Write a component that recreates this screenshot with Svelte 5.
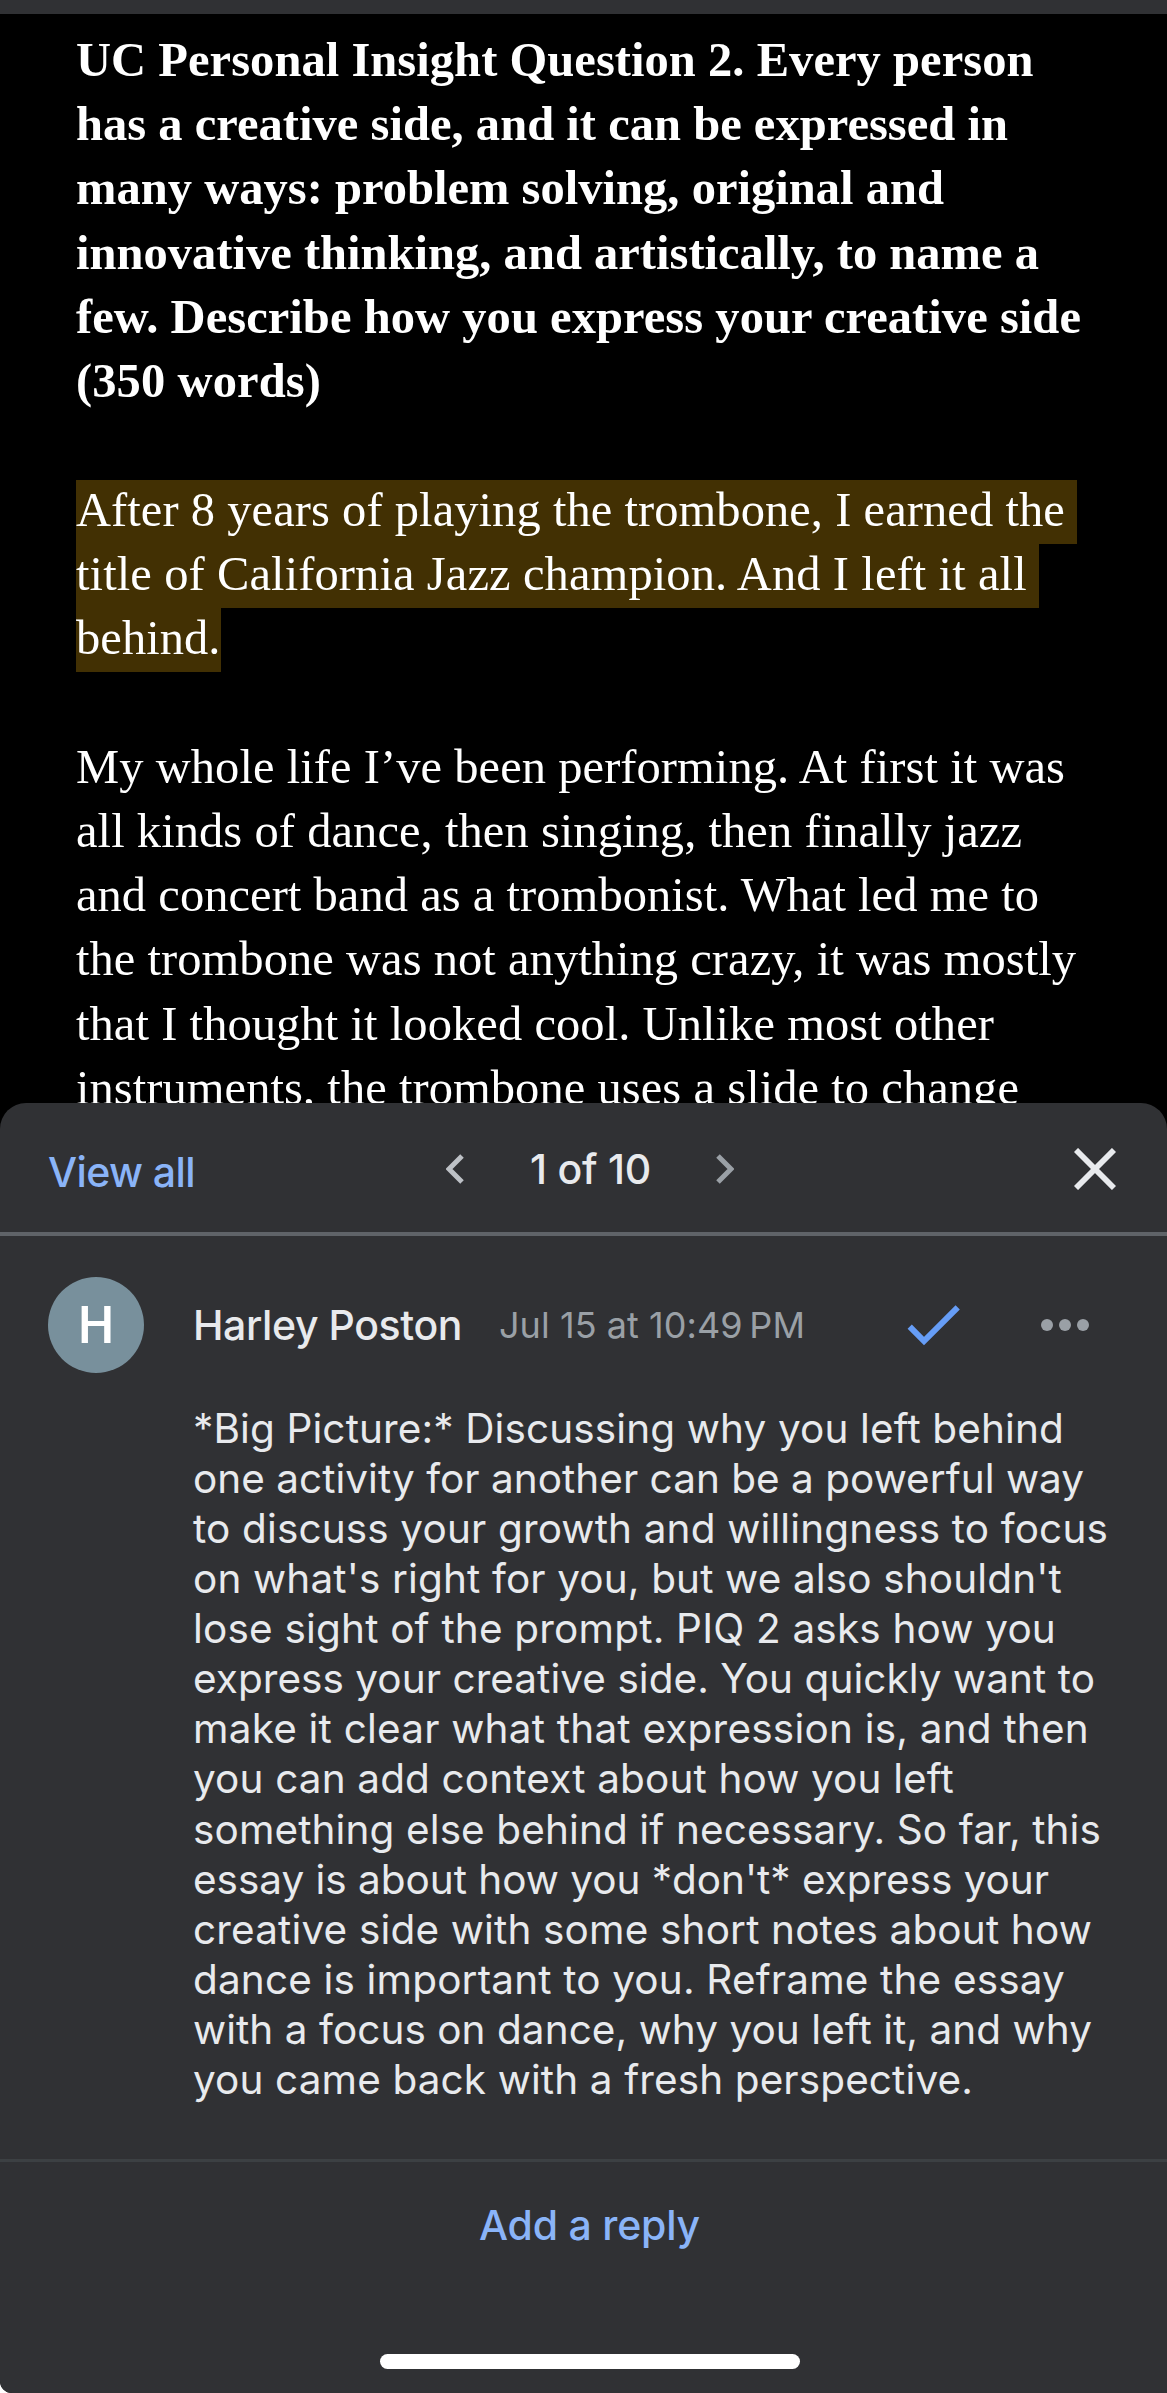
<script lang="ts">
  type Line = [text: string, width: number];

  const prompt: Line[] = [
    ["UC Personal Insight Question 2. Every person", 957.5],
    ["has a creative side, and it can be expressed in", 932],
    ["many ways: problem solving, original and", 868],
    ["innovative thinking, and artistically, to name a", 963],
    ["few. Describe how you express your creative side", 1005],
    ["(350 words)", 245],
  ];

  const highlighted: Line[] = [
    ["After 8 years of playing the trombone, I earned the ", 1001],
    ["title of California Jazz champion. And I left it all ", 963],
    ["behind.", 144.5],
  ];

  const essay: Line[] = [
    ["My whole life I’ve been performing. At first it was", 989],
    ["all kinds of dance, then singing, then finally jazz", 946],
    ["and concert band as a trombonist. What led me to", 963],
    ["the trombone was not anything crazy, it was mostly", 1000],
    ["that I thought it looked cool. Unlike most other", 918],
    ["instruments, the trombone uses a slide to change", 943],
  ];

  const comment: Line[] = [
    ["*Big Picture:* Discussing why you left behind", 871],
    ["one activity for another can be a powerful way", 891],
    ["to discuss your growth and willingness to focus", 915],
    ["on what's right for you, but we also shouldn't", 869],
    ["lose sight of the prompt. PIQ 2 asks how you", 863],
    ["express your creative side. You quickly want to", 902],
    ["make it clear what that expression is, and then", 896],
    ["you can add context about how you left", 761],
    ["something else behind if necessary. So far, this", 908],
    ["essay is about how you *don't* express your", 856],
    ["creative side with some short notes about how", 899],
    ["dance is important to you. Reframe the essay", 872],
    ["with a focus on dance, why you left it, and why", 899],
    ["you came back with a fresh perspective.", 780],
  ];

  // spread the letters so that a line is exactly `width` wide
  function fit(node: HTMLElement, width: number) {
    const natural = node.getBoundingClientRect().width;
    const count = node.textContent?.length ?? 1;
    node.style.letterSpacing = `${(width - natural) / count}px`;
  }
</script>

<div class="screen">
  <div class="toolbar"></div>

  <main class="doc">
    <h1>
      {#each prompt as [text, width]}
        <span class="line"><span class="text" use:fit={width}>{text}</span></span>
      {/each}
    </h1>
    <p>
      {#each highlighted as [text, width]}
        <span class="line"><span class="text mark" use:fit={width}>{text}</span></span>
      {/each}
    </p>
    <p>
      {#each essay as [text, width]}
        <span class="line"><span class="text" use:fit={width}>{text}</span></span>
      {/each}
    </p>
  </main>

  <section class="sheet">
    <header>
      <button class="link"><span class="text" use:fit={147}>View all</span></button>
      <nav>
        <svg width="18" height="30" viewBox="0 0 18 30">
          <path d="M16 2 3 15l13 13" stroke="#bdc1c6" stroke-width="5" fill="none" />
        </svg>
        <span class="count"><span class="text" use:fit={121}>1 of 10</span></span>
        <svg width="18" height="30" viewBox="0 0 18 30">
          <path d="M2 2l13 13L2 28" stroke="#9aa0a6" stroke-width="5" fill="none" />
        </svg>
      </nav>
      <svg class="close" width="42" height="42" viewBox="0 0 42 42">
        <path d="M2 2l38 38M40 2 2 40" stroke="#e8eaed" stroke-width="5.8" fill="none" />
      </svg>
    </header>

    <article>
      <div class="avatar">H</div>
      <div class="meta">
        <span class="name"><span class="text" use:fit={269}>Harley Poston</span></span>
        <span class="date"><span class="text" use:fit={306}>Jul 15 at 10:49&#8239;PM</span></span>
        <svg class="check" width="54" height="42" viewBox="0 0 54 42">
          <path d="M2.7 22.7 17 37 50.7 3.3" stroke="#669df6" stroke-width="6" fill="none" />
        </svg>
        <svg class="more" width="48" height="12" viewBox="0 0 48 12" fill="#9aa0a6">
          <circle cx="6" cy="6" r="6" />
          <circle cx="24" cy="6" r="6" />
          <circle cx="42" cy="6" r="6" />
        </svg>
      </div>
      <div class="body">
        {#each comment as [text, width]}
          <div><span class="text" use:fit={width}>{text}</span></div>
        {/each}
      </div>
    </article>

    <footer>
      <button class="link"><span class="text" use:fit={221}>Add a reply</span></button>
      <div class="home"></div>
    </footer>
  </section>
</div>

<style>
  :global(body) {
    background: #fff;
  }

  .screen {
    width: 1167px;
    height: 2393px;
    display: flex;
    flex-direction: column;
    overflow: hidden;
    background: #000;
    border-radius: 0 0 0 12px;
    font-family: Inter, "Liberation Sans", sans-serif;
  }

  .toolbar {
    flex: none;
    height: 14px;
    background: #303134;
  }

  .doc {
    flex: none;
    box-sizing: border-box;
    height: 1089px;
    padding: 15.8px 0 0 76px;
    overflow: hidden;
    color: #fff;
    font-family: "Liberation Serif", serif;
    font-size: 48.5px;
  }

  h1,
  p {
    margin: 0 0 64.25px;
    font-size: inherit;
  }

  .line {
    display: block;
    height: 64.25px;
  }

  .text {
    display: inline-block;
    white-space: pre;
  }

  .line .text {
    height: 64.25px;
    line-height: 60.25px;
    vertical-align: top;
  }

  .mark {
    background: #423003;
  }

  .sheet {
    flex: 1;
    display: flex;
    flex-direction: column;
    background: #303134;
    border-radius: 26px 26px 0 0;
    color: #e8eaed;
  }

  header {
    display: grid;
    grid-template-columns: 1fr auto 1fr;
    align-items: center;
    height: 129px;
    padding: 0 51px 0 48px;
    border-bottom: 4px solid #5f6368;
  }

  button {
    padding: 0;
    border: 0;
    background: none;
    font: inherit;
    text-align: left;
  }

  .link {
    color: #8ab4f8;
    font-size: 41px;
    font-weight: 500;
    line-height: 50px;
  }

  header .link {
    padding-top: 8px;
  }

  nav {
    display: flex;
    align-items: center;
    padding: 2px 0 0 16px;
  }

  .count {
    margin: 0 65px 0 66px;
    font-size: 41px;
    font-weight: 500;
    line-height: 50px;
  }

  .close {
    justify-self: end;
    margin-top: 2px;
  }

  article {
    display: grid;
    grid-template-columns: 96px 1fr;
    column-gap: 49px;
    padding: 41px 48px 0;
  }

  .avatar {
    width: 96px;
    height: 96px;
    border-radius: 50%;
    background: #78909c;
    color: #fff;
    font: 500 51px/98px Roboto, sans-serif;
    text-align: center;
  }

  .meta {
    display: flex;
    align-items: center;
    height: 96px;
    padding-right: 30px;
  }

  .name {
    font-size: 41px;
    font-weight: 500;
    line-height: 50px;
  }

  .date {
    margin-left: 37px;
    color: #9aa0a6;
    font-size: 36px;
    line-height: 50px;
  }

  .check {
    margin-left: auto;
  }

  .more {
    margin-left: 80px;
  }

  .body {
    grid-column: 2;
    margin-top: 30.5px;
    font-size: 40.5px;
    line-height: 50.13px;
  }

  footer {
    display: flex;
    flex-direction: column;
    align-items: center;
    justify-content: space-between;
    box-sizing: border-box;
    height: 234px;
    margin-top: auto;
    padding: 38px 0 24px;
    border-top: 3px solid #3c4043;
  }

  footer .link {
    padding-left: 12px;
  }

  .home {
    width: 420px;
    height: 15px;
    margin-left: 13px;
    border-radius: 8px;
    background: #fff;
  }
</style>
